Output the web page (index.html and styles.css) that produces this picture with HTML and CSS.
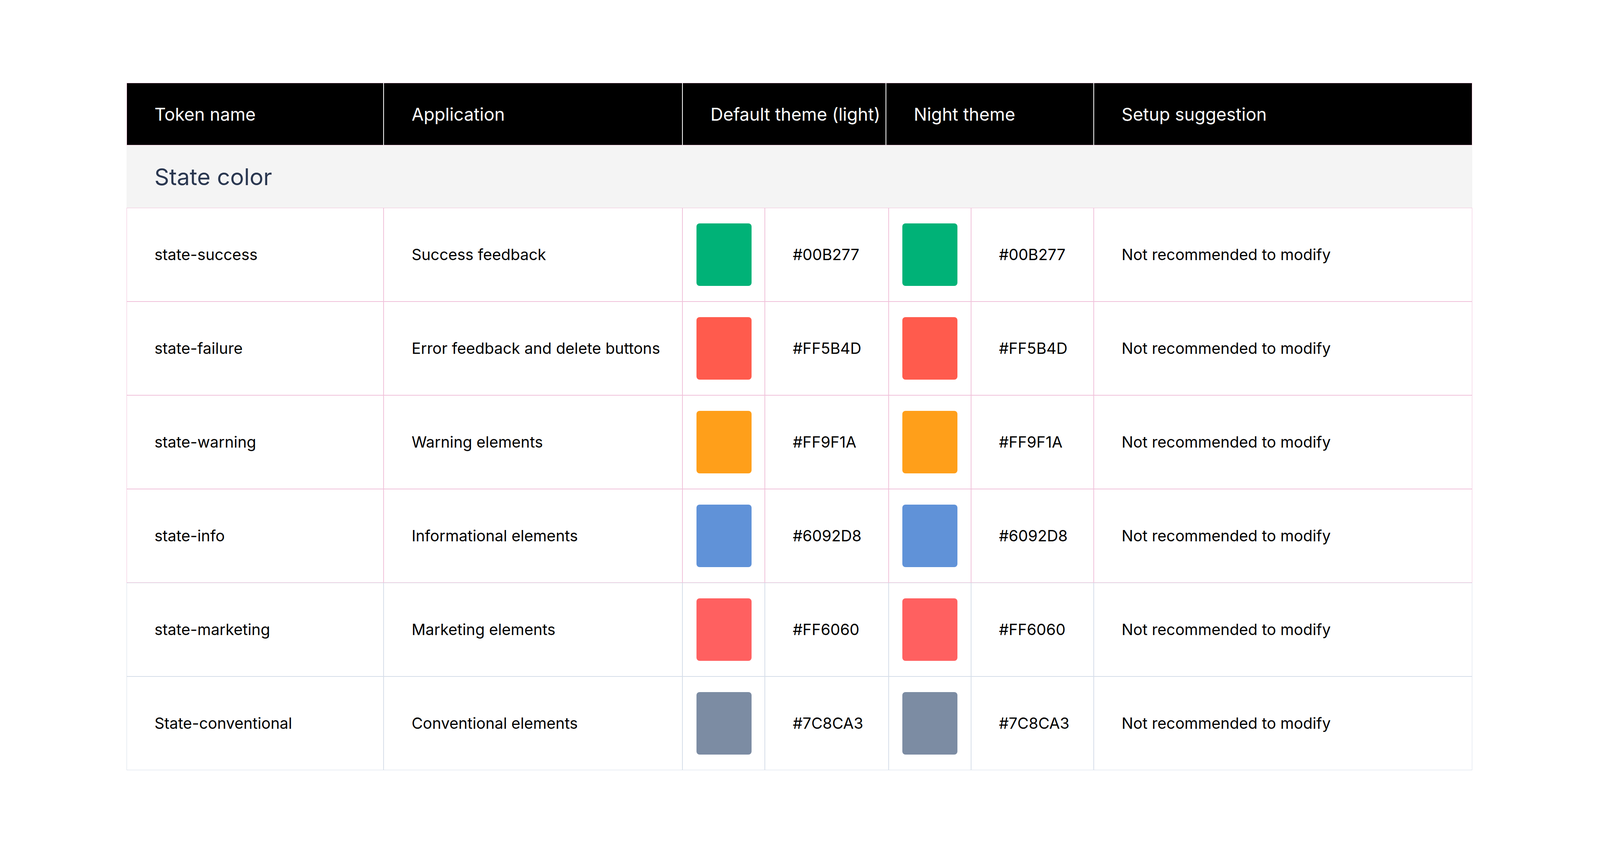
FILE: index.html
```html
<!DOCTYPE html>
<html lang="en">
<head>
<meta charset="utf-8">
<title>State color tokens</title>
<link rel="stylesheet" href="styles.css">
</head>
<body>
<div class="table">
  <div class="thead">
    <div class="th">Token name</div>
    <div class="th">Application</div>
    <div class="th">Default theme (light)</div>
    <div class="th">Night theme</div>
    <div class="th th-last">Setup suggestion</div>
  </div>
  <div class="section">State color</div>

  <div class="row">
    <div class="td">state-success</div>
    <div class="td">Success feedback</div>
    <div class="td sw"><span class="swatch" style="background:#00B277"></span></div>
    <div class="td">#00B277</div>
    <div class="td sw"><span class="swatch" style="background:#00B277"></span></div>
    <div class="td">#00B277</div>
    <div class="td">Not recommended to modify</div>
  </div>
  <div class="row">
    <div class="td">state-failure</div>
    <div class="td">Error feedback and delete buttons</div>
    <div class="td sw"><span class="swatch" style="background:#FF5B4D"></span></div>
    <div class="td">#FF5B4D</div>
    <div class="td sw"><span class="swatch" style="background:#FF5B4D"></span></div>
    <div class="td">#FF5B4D</div>
    <div class="td">Not recommended to modify</div>
  </div>
  <div class="row">
    <div class="td">state-warning</div>
    <div class="td">Warning elements</div>
    <div class="td sw"><span class="swatch" style="background:#FF9F1A"></span></div>
    <div class="td">#FF9F1A</div>
    <div class="td sw"><span class="swatch" style="background:#FF9F1A"></span></div>
    <div class="td">#FF9F1A</div>
    <div class="td">Not recommended to modify</div>
  </div>
  <div class="row">
    <div class="td">state-info</div>
    <div class="td">Informational elements</div>
    <div class="td sw"><span class="swatch" style="background:#6092D8"></span></div>
    <div class="td">#6092D8</div>
    <div class="td sw"><span class="swatch" style="background:#6092D8"></span></div>
    <div class="td">#6092D8</div>
    <div class="td">Not recommended to modify</div>
  </div>
  <div class="row row-gray">
    <div class="td">state-marketing</div>
    <div class="td">Marketing elements</div>
    <div class="td sw"><span class="swatch" style="background:#FF6060"></span></div>
    <div class="td">#FF6060</div>
    <div class="td sw"><span class="swatch" style="background:#FF6060"></span></div>
    <div class="td">#FF6060</div>
    <div class="td">Not recommended to modify</div>
  </div>
  <div class="row row-gray">
    <div class="td">State-conventional</div>
    <div class="td">Conventional elements</div>
    <div class="td sw"><span class="swatch" style="background:#7C8CA3"></span></div>
    <div class="td">#7C8CA3</div>
    <div class="td sw"><span class="swatch" style="background:#7C8CA3"></span></div>
    <div class="td">#7C8CA3</div>
    <div class="td">Not recommended to modify</div>
  </div>
</div>
</body>
</html>
```

FILE: styles.css
```css
:root {
  --u: calc(100vw / 4642);
  --pink: #f0c2da;
  --slate: #d6dee9;
}

html, body {
  margin: 0;
  padding: 0;
  background: #ffffff;
}

body {
  font-family: Inter, "Noto Sans", "Liberation Sans", sans-serif;
  color: #000000;
  padding-top: 212px;
  padding-left: calc(367 * var(--u));
}

.table {
  width: calc(3904 * var(--u));
}

.thead {
  display: grid;
  grid-template-columns: 746fr 867fr 590fr 603fr 1098fr;
  height: 160px;
}

.th {
  box-sizing: border-box;
  height: 160px;
  min-width: 0;
  background: #000000;
  color: #ffffff;
  font-size: 45px;
  white-space: nowrap;
  display: flex;
  align-items: center;
  padding-left: calc(80 * var(--u));
  border-top: 1px solid var(--pink);
  border-bottom: 1px solid var(--pink);
  border-left: 1px solid #ffffff;
  border-right: 1px solid #ffffff;
}

.th:first-child {
  border-left-color: var(--pink);
}

.th-last {
  border-right-color: var(--pink);
}

.section {
  box-sizing: border-box;
  height: 160px;
  background: #f4f4f4;
  color: #2a3750;
  font-size: 59px;
  display: flex;
  align-items: center;
  padding-left: calc(81 * var(--u));
}

.row {
  display: grid;
  grid-template-columns: 746fr 867fr 239fr 359fr 239fr 356fr 1098fr;
  height: 240px;
}

.td {
  box-sizing: border-box;
  height: 240px;
  min-width: 0;
  border: 1px solid var(--pink);
  display: flex;
  align-items: center;
  padding-left: calc(80 * var(--u));
  font-size: 39.5px;
  white-space: nowrap;
}

.row-gray .td {
  border-color: var(--slate);
}

.td.sw {
  padding-left: calc(39 * var(--u));
}

.swatch {
  display: block;
  flex: none;
  width: calc(160 * var(--u));
  height: 160px;
  border-radius: 8px;
}
```
